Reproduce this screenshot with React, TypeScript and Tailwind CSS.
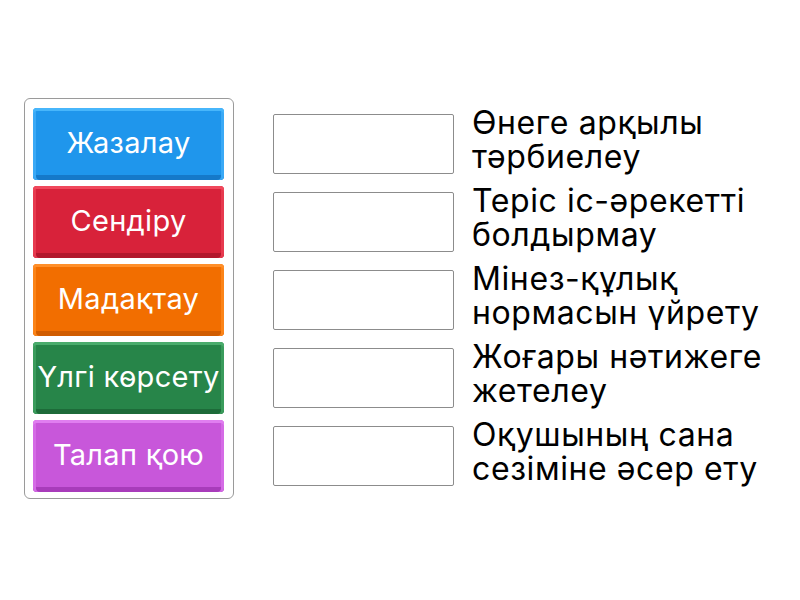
import React from "react";

const buttons = [
  { label: "Жазалау", cls: "bg-[#1f96ec] shadow-[inset_0_3px_0_#47b6fb,inset_3px_0_0_#3aa9f6,inset_-3px_0_0_#3aa9f6,inset_0_-5px_0_#1579c9]" },
  { label: "Сендіру", cls: "bg-[#d8223a] shadow-[inset_0_3px_0_#f0485c,inset_3px_0_0_#e73a4f,inset_-3px_0_0_#e73a4f,inset_0_-5px_0_#b2172c]" },
  { label: "Мадақтау", cls: "bg-[#f26e00] shadow-[inset_0_3px_0_#ff8f2a,inset_3px_0_0_#fb8418,inset_-3px_0_0_#fb8418,inset_0_-5px_0_#d05c00]" },
  { label: "Үлгі көрсету", cls: "bg-[#278549] shadow-[inset_0_3px_0_#4aac6c,inset_3px_0_0_#3a9c5c,inset_-3px_0_0_#3a9c5c,inset_0_-5px_0_#1d6b39]" },
  { label: "Талап қою", cls: "bg-[#c857da] shadow-[inset_0_3px_0_#e07ef0,inset_3px_0_0_#d56be6,inset_-3px_0_0_#d56be6,inset_0_-5px_0_#a83cba]" },
];

const targets = [
  ["Өнеге арқылы", "тәрбиелеу"],
  ["Теріс іс-әрекетті", "болдырмау"],
  ["Мінез-құлық", "нормасын үйрету"],
  ["Жоғары нәтижеге", "жетелеу"],
  ["Оқушының сана", "сезіміне әсер ету"],
];

export default function App() {
  return (
    <div className="w-[800px] h-[600px] bg-white flex items-start pt-[98px] pl-[24px]">
      <div className="w-[210px] h-[401px] border border-[#9a9a9a] rounded-[6px] pl-[8px] pt-[9px] flex flex-col gap-[6px]">
        {buttons.map((b) => (
          <div
            key={b.label}
            className={`w-[191px] h-[72px] rounded-[4px] flex items-center justify-center text-white text-[29px] tracking-[0.3px] whitespace-nowrap pb-[3px] ${b.cls}`}
            style={{ fontFamily: "Inter, 'Noto Sans', sans-serif" }}
          >
            {b.label}
          </div>
        ))}
      </div>
      <div className="ml-[39px] flex flex-col gap-[6px] pt-[10px]">
        {targets.map((t, i) => (
          <div key={i} className="h-[72px] flex items-center">
            <div className="w-[181px] h-[60px] border border-[#8c8c8c] rounded-[2px] bg-white" />
            <div
              className="ml-[18px] text-[32px] leading-[34px] tracking-[0.6px] text-black -mt-[8px] whitespace-nowrap"
              style={{ fontFamily: "Inter, 'Noto Sans', sans-serif" }}
            >
              <div>{t[0]}</div>
              <div>{t[1]}</div>
            </div>
          </div>
        ))}
      </div>
    </div>
  );
}
